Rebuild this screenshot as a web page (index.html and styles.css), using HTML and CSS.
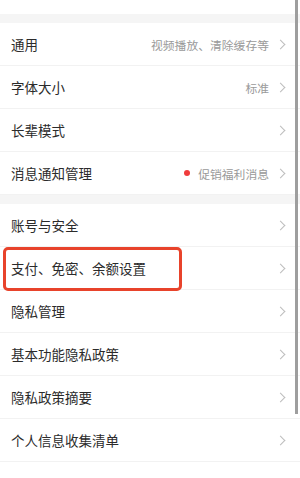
FILE: index.html
```html
<!DOCTYPE html>
<html lang="zh-CN">
<head>
  <meta charset="UTF-8">
  <meta name="viewport" content="width=device-width, initial-scale=1.0">
  <title>设置</title>
  <link rel="stylesheet" href="styles.css">
</head>
<body>
  <div class="page">
    <div class="top-space"></div>

    <!-- 第一组 -->
    <div class="group">
      <div class="row">
        <span class="label">通用</span>
        <span class="value">视频播放、清除缓存等</span>
        <span class="arrow"></span>
      </div>
      <div class="row">
        <span class="label">字体大小</span>
        <span class="value">标准</span>
        <span class="arrow"></span>
      </div>
      <div class="row">
        <span class="label">长辈模式</span>
        <span class="arrow"></span>
      </div>
      <div class="row">
        <span class="label">消息通知管理</span>
        <span class="dot"></span>
        <span class="value">促销福利消息</span>
        <span class="arrow"></span>
      </div>
    </div>

    <!-- 第二组 -->
    <div class="group">
      <div class="row">
        <span class="label">账号与安全</span>
        <span class="arrow"></span>
      </div>
      <div class="row marked">
        <span class="label">支付、免密、余额设置</span>
        <span class="arrow"></span>
      </div>
      <div class="row">
        <span class="label">隐私管理</span>
        <span class="arrow"></span>
      </div>
      <div class="row">
        <span class="label">基本功能隐私政策</span>
        <span class="arrow"></span>
      </div>
      <div class="row">
        <span class="label">隐私政策摘要</span>
        <span class="arrow"></span>
      </div>
      <div class="row">
        <span class="label">个人信息收集清单</span>
        <span class="arrow"></span>
      </div>
    </div>

    <div class="scrollbar"></div>
  </div>
</body>
</html>
```

FILE: styles.css
```css
/* Estilos generales */
body {
  margin: 0;
  padding: 0;
  background: #fff;
  font-family: "Noto Sans CJK SC", "Noto Sans", sans-serif;
}

.page {
  position: relative;
  width: 300px;
  height: 478px;
  overflow: hidden;
  background: #fff;
}

.top-space {
  height: 14px;
}

/* Grupos separados por banda gris */
.group {
  border-top: 9px solid #f5f5f5;
}

.row {
  display: flex;
  align-items: center;
  height: 42px;
  padding: 0 16px 0 11px;
  border-bottom: 1px solid #f2f2f2;
  position: relative;
}

.group:first-of-type .row:last-child {
  border-bottom: none;
  height: 43px;
}

.label {
  flex: 1;
  font-size: 13.5px;
  color: #2b2b2b;
  white-space: nowrap;
}

.value {
  font-size: 11.8px;
  color: #9a9a9a;
  white-space: nowrap;
}

.dot {
  width: 6px;
  height: 6px;
  border-radius: 50%;
  background: #f03c3c;
  margin-right: 8px;
}

/* Flecha derecha */
.arrow {
  width: 6px;
  height: 6px;
  border-top: 1px solid #bdbdbd;
  border-right: 1px solid #bdbdbd;
  transform: rotate(45deg);
  margin-left: 8px;
}

/* Marco rojo de anotación */
.marked::after {
  content: "";
  position: absolute;
  left: 3px;
  top: 0;
  width: 173px;
  height: 38px;
  border: 3px solid #e8432b;
  border-radius: 5px;
}

.scrollbar {
  position: absolute;
  right: 2px;
  top: 0;
  width: 3px;
  height: 414px;
  background: #9e9e9e;
}
```
